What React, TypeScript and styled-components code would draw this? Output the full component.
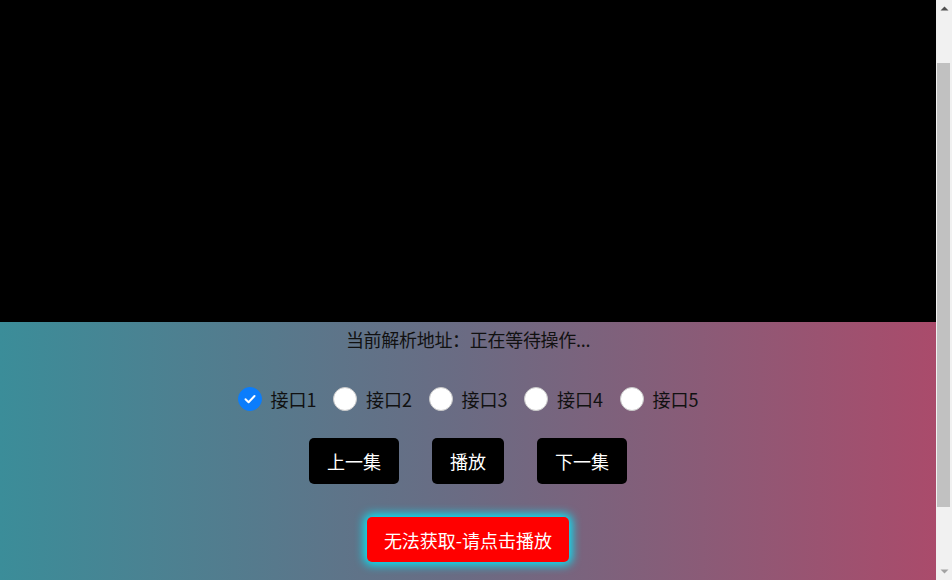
import React, { useState } from "react";
import styled, { createGlobalStyle } from "styled-components";

const GlobalStyle = createGlobalStyle`
  html, body {
    margin: 0;
    padding: 0;
    overflow: hidden;
  }
  body {
    font-family: "Noto Sans CJK SC", "Noto Sans", sans-serif;
  }
`;

const Shell = styled.div`
  display: flex;
  height: 100vh;
`;

const Page = styled.main`
  flex: 1;
  min-width: 0;
  background: linear-gradient(to right, #3b8d99, #6b6b83, #aa4b6b);
  display: flex;
  flex-direction: column;
  align-items: center;
  overflow: hidden;
`;

const Player = styled.div`
  width: 100%;
  height: 322px;
  flex-shrink: 0;
  background: #000;
`;

const Status = styled.div`
  margin-top: 4px;
  font-size: 18px;
  line-height: 27px;
  letter-spacing: -0.3px;
  color: #111;
`;

const RadioRow = styled.div`
  margin-top: 34px;
  display: flex;
  align-items: center;
  gap: 16.5px;
`;

const RadioItem = styled.label`
  display: flex;
  align-items: center;
  gap: 9px;
  font-size: 18px;
  line-height: 24px;
  color: #111;
  cursor: pointer;
`;

const Circle = styled.span<{ $checked: boolean }>`
  width: 24px;
  height: 24px;
  box-sizing: border-box;
  border-radius: 50%;
  background: ${(p) => (p.$checked ? "#0b7dfc" : "#fff")};
  border: 1px solid ${(p) => (p.$checked ? "#0b7dfc" : "#c8c8c8")};
  display: flex;
  align-items: center;
  justify-content: center;
`;

const ButtonRow = styled.div`
  margin-top: 27px;
  display: flex;
  gap: 33px;
`;

const NavButton = styled.button`
  height: 46px;
  padding: 0 18px;
  border: none;
  border-radius: 5px;
  background: #000;
  color: #fff;
  font-family: inherit;
  font-size: 18px;
  cursor: pointer;
`;

const AlertButton = styled.button`
  margin-top: 33px;
  height: 45px;
  padding: 0 17px;
  border: none;
  border-radius: 5px;
  background: #ff0000;
  color: #fff;
  font-family: inherit;
  font-size: 18px;
  box-shadow: 0 0 10px 3px rgba(0, 238, 255, 0.95);
  cursor: pointer;
`;

/* Decorative scrollbar (the page was photographed scrolled, with a classic scrollbar) */
const Rail = styled.div`
  width: 16px;
  flex-shrink: 0;
  background: #f1f1f1;
  display: flex;
  flex-direction: column;
`;

const RailArrow = styled.div`
  height: 17px;
  display: flex;
  align-items: center;
  justify-content: center;
`;

const RailTrack = styled.div`
  flex: 1;
  display: flex;
  flex-direction: column;
  padding: 46px 2px 0 1px;
`;

const RailThumb = styled.div`
  height: 444px;
  background: #c1c1c1;
`;

const Arrow = ({ down }: { down?: boolean }) => (
  <svg width="9" height="5" viewBox="0 0 9 5">
    <path d={down ? "M0.5 0.5 L8.5 0.5 L4.5 4.5 Z" : "M0.5 4.5 L8.5 4.5 L4.5 0.5 Z"} fill={down ? "#a3a3a3" : "#505050"} />
  </svg>
);

const Check = () => (
  <svg width="14" height="14" viewBox="0 0 14 14">
    <path d="M2.5 7.2 L5.6 10.2 L11.5 4" fill="none" stroke="#fff" strokeWidth="2" strokeLinecap="round" strokeLinejoin="round" />
  </svg>
);

export default function App() {
  const [selected, setSelected] = useState(1);
  return (
    <>
      <GlobalStyle />
      <Shell>
        <Page>
          <Player />
          <Status>当前解析地址：正在等待操作...</Status>
          <RadioRow>
            {[1, 2, 3, 4, 5].map((n) => (
              <RadioItem key={n} onClick={() => setSelected(n)}>
                <Circle $checked={selected === n}>{selected === n && <Check />}</Circle>
                接口{n}
              </RadioItem>
            ))}
          </RadioRow>
          <ButtonRow>
            <NavButton>上一集</NavButton>
            <NavButton>播放</NavButton>
            <NavButton>下一集</NavButton>
          </ButtonRow>
          <AlertButton>无法获取-请点击播放</AlertButton>
        </Page>
        <Rail aria-hidden>
          <RailArrow>
            <Arrow />
          </RailArrow>
          <RailTrack>
            <RailThumb />
          </RailTrack>
          <RailArrow>
            <Arrow down />
          </RailArrow>
        </Rail>
      </Shell>
    </>
  );
}
